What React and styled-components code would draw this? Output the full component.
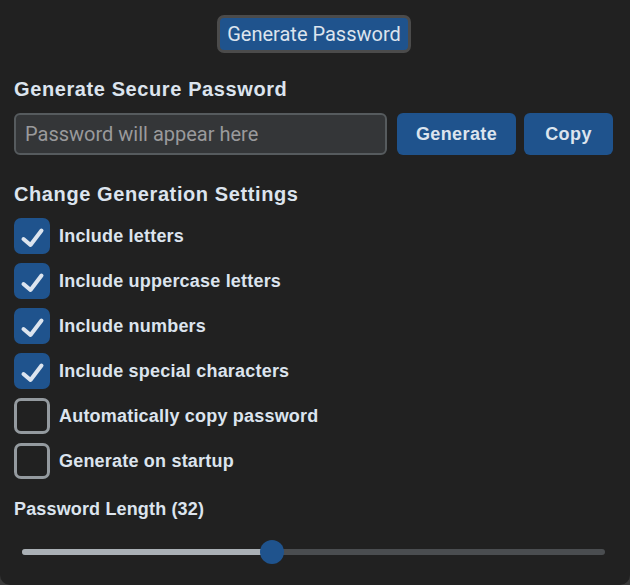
import React, { useState } from "react";
import styled, { createGlobalStyle } from "styled-components";

const GlobalStyle = createGlobalStyle`
  html, body {
    margin: 0;
    padding: 0;
    background: #3a3a3a;
  }
`;

const Window = styled.div`
  width: 630px;
  height: 585px;
  box-sizing: border-box;
  background: #212121;
  border-radius: 0 0 10px 10px;
  padding: 15px 17px 0 14px;
  display: flex;
  flex-direction: column;
  color: #dce4ee;
  font-family: "Liberation Sans", Arial, sans-serif;
  overflow: hidden;
`;

const HeaderButton = styled.button`
  align-self: center;
  margin-left: 1px;
  height: 38px;
  width: 194px;
  padding: 0;
  border: 3px solid #4b4b4b;
  border-radius: 7px;
  background: #1f538d;
  color: #dce4ee;
  font-family: Roboto, "Liberation Sans", sans-serif;
  font-size: 20px;
  cursor: pointer;
`;

const Heading = styled.div`
  font-weight: bold;
  font-size: ${({ $size }) => $size || 20}px;
  letter-spacing: ${({ $size }) => ($size ? 0.15 : 0.6)}px;
  line-height: 22px;
  margin-top: ${({ $top }) => $top}px;
`;

const EntryRow = styled.div`
  display: flex;
  height: 42px;
  margin-top: 13px;
`;

const Entry = styled.input`
  width: 373px;
  box-sizing: border-box;
  border: 2px solid #565b5e;
  border-radius: 6px;
  background: #343638;
  color: #dce4ee;
  padding: 0 9px;
  font-family: Roboto, "Liberation Sans", sans-serif;
  font-size: 20px;
  outline: none;
  &::placeholder {
    color: #9a9a9c;
  }
`;

const ActionButton = styled.button`
  width: ${({ $w }) => $w}px;
  margin-left: ${({ $gap }) => $gap}px;
  padding: 0;
  border: none;
  border-radius: 6px;
  background: #1f538d;
  color: #dce4ee;
  font-family: "Liberation Sans", Arial, sans-serif;
  font-weight: bold;
  font-size: 18px;
  letter-spacing: 0.4px;
  cursor: pointer;
`;

const OptionList = styled.div`
  display: flex;
  flex-direction: column;
  gap: 9px;
  margin-top: 13px;
`;

const Option = styled.label`
  display: flex;
  align-items: center;
  gap: 9px;
  height: 36px;
  font-weight: bold;
  font-size: 18px;
  letter-spacing: 0.2px;
  cursor: pointer;
`;

const Box = styled.span`
  width: 36px;
  height: 36px;
  box-sizing: border-box;
  border-radius: 7px;
  border: ${({ $on }) => ($on ? "none" : "3px solid #949a9f")};
  background: ${({ $on }) => ($on ? "#1f538d" : "transparent")};
  display: flex;
  align-items: center;
  justify-content: center;
`;

const SliderWrap = styled.div`
  margin: 20px 8px 0 8px;
  height: 24px;
  display: flex;
  align-items: center;
`;

const Track = styled.div`
  position: relative;
  width: 100%;
  height: 6px;
  border-radius: 3px;
  background: #4a4d50;
`;

const Fill = styled.div`
  height: 100%;
  border-radius: 3px;
  background: #aab0b5;
`;

const Thumb = styled.div`
  position: absolute;
  top: 50%;
  width: 24px;
  height: 24px;
  border-radius: 50%;
  background: #1f538d;
  transform: translate(-50%, -50%);
`;

const Check = () => (
  <svg width="36" height="36" viewBox="0 0 36 36">
    <path
      d="M9.5 21 L16.5 27 L27.5 12.5"
      fill="none"
      stroke="#dce4ee"
      strokeWidth="4"
      strokeLinecap="round"
      strokeLinejoin="round"
    />
  </svg>
);

const options = [
  ["Include letters", true],
  ["Include uppercase letters", true],
  ["Include numbers", true],
  ["Include special characters", true],
  ["Automatically copy password", false],
  ["Generate on startup", false],
];

const App = () => {
  const [checks, setChecks] = useState(options.map((o) => o[1]));
  const length = 32;
  const pct = ((length - 8) / (64 - 8)) * 100;

  return (
    <>
      <GlobalStyle />
      <Window>
        <HeaderButton>Generate Password</HeaderButton>
        <Heading $top={25}>Generate Secure Password</Heading>
        <EntryRow>
          <Entry placeholder="Password will appear here" />
          <ActionButton $w={119} $gap={10}>Generate</ActionButton>
          <ActionButton $w={89} $gap={8}>Copy</ActionButton>
        </EntryRow>
        <Heading $top={28}>Change Generation Settings</Heading>
        <OptionList>
          {options.map(([label], i) => (
            <Option
              key={label}
              onClick={() =>
                setChecks((c) => c.map((v, j) => (j === i ? !v : v)))
              }
            >
              <Box $on={checks[i]}>{checks[i] && <Check />}</Box>
              {label}
            </Option>
          ))}
        </OptionList>
        <Heading $top={19} $size={18}>
          Password Length ({length})
        </Heading>
        <SliderWrap>
          <Track>
            <Fill style={{ width: `${pct}%` }} />
            <Thumb style={{ left: `${pct}%` }} />
          </Track>
        </SliderWrap>
      </Window>
    </>
  );
};

export default App;
